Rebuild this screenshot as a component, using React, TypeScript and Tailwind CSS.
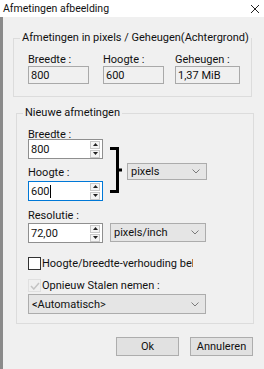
import type { ReactNode } from "react";

function Spinner() {
  return (
    <div className="flex flex-col gap-[1px] mr-[2px]">
      <div className="w-[10px] h-[8px] border border-[#c8c8c8] bg-[#f4f4f4] flex items-center justify-center">
        <svg width="5" height="3" viewBox="0 0 5 3"><path d="M2.5 0 L5 3 L0 3 Z" fill="#222" /></svg>
      </div>
      <div className="w-[10px] h-[8px] border border-[#c8c8c8] bg-[#f4f4f4] flex items-center justify-center">
        <svg width="5" height="3" viewBox="0 0 5 3"><path d="M0 0 L5 0 L2.5 3 Z" fill="#222" /></svg>
      </div>
    </div>
  );
}

function NumInput({ value, focused, caret }: { value: string; focused?: boolean; caret?: boolean }) {
  return (
    <div
      className={`w-[75px] h-[20px] bg-white border flex items-center justify-between pl-[2px] ${
        focused ? "border-[#0078d7]" : "border-[#8f8f8f]"
      }`}
    >
      <span className="flex items-center">
        {value}
        {caret && <span className="w-px h-[13px] bg-black" />}
      </span>
      <Spinner />
    </div>
  );
}

function Chevron() {
  return (
    <svg width="8" height="5" viewBox="0 0 8 5" className="shrink-0">
      <path d="M0.5 0.5 L4 4 L7.5 0.5" fill="none" stroke="#7a7a7a" strokeWidth="1" />
    </svg>
  );
}

function Select({ label, className }: { label: string; className: string }) {
  return (
    <div className={`bg-[#e5e5e5] border border-[#acacac] flex items-center justify-between pl-[3px] pr-[6px] ${className}`}>
      <span>{label}</span>
      <Chevron />
    </div>
  );
}

function GroupBox({ title, className, children }: { title: string; className: string; children: ReactNode }) {
  return (
    <div className={`border border-[#dcdcdc] flex flex-col ${className}`}>
      <div className="-mt-[8px] ml-[6px] px-[2px] w-fit bg-[#f0f0f0] leading-[13px]">{title}</div>
      {children}
    </div>
  );
}

function Button({ label }: { label: string }) {
  return (
    <div className="w-[63px] h-[19px] bg-[#e1e1e1] border border-[#adadad] flex items-center justify-center">
      {label}
    </div>
  );
}

export default function App() {
  return (
    <div
      className="w-[264px] h-[369px] bg-[#f0f0f0] flex flex-col overflow-hidden text-[11px] leading-[13px] text-[#111]"
      style={{ fontFamily: "Roboto, 'Liberation Sans', sans-serif" }}
    >
      {/* title bar */}
      <div className="h-[17px] bg-white flex items-center justify-between pl-[3px] pr-[5px] shrink-0">
        <span className="text-[10.5px]">Afmetingen afbeelding</span>
        <svg width="8" height="8" viewBox="0 0 8 8">
          <path d="M0 0 L8 8 M8 0 L0 8" stroke="#222" strokeWidth="1" />
        </svg>
      </div>

      <div className="flex-1 border-l-[3px] border-[#8a8a8a] flex flex-col">
        <GroupBox title="Afmetingen in pixels / Geheugen(Achtergrond)" className="mt-[21px] ml-[10px] w-[239px] h-[59px]">
          <div className="flex pl-[14px] mt-[9px]">
            <div className="w-[61px] flex flex-col">
              <span>Breedte :</span>
              <div className="h-[18px] border border-[#a9a9a9] flex items-center pl-[2px]">800</div>
            </div>
            <div className="w-[61px] ml-[14px] flex flex-col">
              <span>Hoogte :</span>
              <div className="h-[18px] border border-[#a9a9a9] flex items-center pl-[2px]">600</div>
            </div>
            <div className="w-[65px] ml-[11px] flex flex-col">
              <span>Geheugen :</span>
              <div className="h-[18px] border border-[#a9a9a9] flex items-center pl-[2px]">1,37 MiB</div>
            </div>
          </div>
        </GroupBox>

        <GroupBox title="Nieuwe afmetingen" className="mt-[16px] ml-[13px] w-[238px] h-[211px]">
          <div className="flex pl-[11px] mt-[9px]">
            <div className="flex flex-col w-[75px]">
              <span>Breedte :</span>
              <div className="-mt-[2px]">
                <NumInput value="800" />
              </div>
              <span className="mt-[7px]">Hoogte :</span>
              <div className="mt-[2px]">
                <NumInput value="600" focused caret />
              </div>
            </div>
            <svg width="13" height="46" viewBox="0 0 13 46" className="ml-[7px] mt-[19px]">
              <path d="M0 1.5 H7.5 V44.5 H0 M7.5 23 H12" fill="none" stroke="#000" strokeWidth="3" />
            </svg>
            <Select label="pixels" className="ml-[4px] mt-[35px] w-[80px] h-[17px]" />
          </div>

          <span className="pl-[11px] mt-[8px]">Resolutie :</span>
          <div className="flex pl-[11px] mt-[1px]">
            <NumInput value="72,00" />
            <Select label="pixels/inch" className="ml-[7px] w-[96px] h-[19px]" />
          </div>

          <div className="flex items-center pl-[11px] mt-[14px] h-[13px]">
            <div className="w-[13px] h-[13px] border border-[#333] bg-white shrink-0" />
            <span className="ml-[1px] w-[151px] overflow-hidden whitespace-nowrap">Hoogte/breedte-verhouding behouden</span>
          </div>

          <div className="flex items-center pl-[11px] mt-[9px] h-[13px]">
            <div className="w-[13px] h-[13px] border border-[#e0e0e0] flex items-center justify-center shrink-0">
              <svg width="10" height="8" viewBox="0 0 10 8">
                <path d="M1 4 L3.8 7 L9 1" fill="none" stroke="#c4c4c4" strokeWidth="1.5" />
              </svg>
            </div>
            <span className="ml-[1px]">Opnieuw Stalen nemen :</span>
          </div>

          <div className="pl-[11px] mt-[2px]">
            <Select label="<Automatisch>" className="w-[178px] h-[20px]" />
          </div>
        </GroupBox>

        <div className="flex justify-end gap-[11px] pr-[11px] mt-[13px]">
          <Button label="Ok" />
          <Button label="Annuleren" />
        </div>
      </div>
    </div>
  );
}
